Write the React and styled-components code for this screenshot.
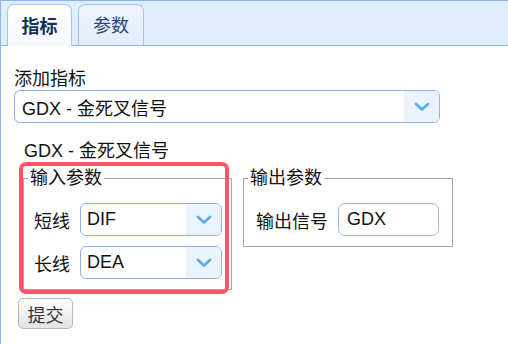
import React from "react";
import styled, { createGlobalStyle } from "styled-components";

const Global = createGlobalStyle`
  html, body { margin: 0; padding: 0; background: #fff; overflow: hidden; }
  body { font-family: "Liberation Sans", "Noto Sans CJK SC", sans-serif; font-size: 18px; color: #111; }
  * { box-sizing: border-box; }
`;

const Container = styled.div`
  width: 100vw;
  height: 100vh;
  border-top: 1px solid #8fb5e6;
  border-left: 1px solid #8fb5e6;
  background: #fff;
`;

const TabBar = styled.div`
  display: flex;
  align-items: flex-end;
  gap: 6px;
  height: 45px;
  padding-left: 6px;
  background: #dfedfd;
  border-bottom: 1px solid #8fb5e6;
`;

const Tab = styled.div`
  width: ${(p) => p.$w}px;
  height: 42px;
  margin-bottom: -1px;
  border: 1px solid #a3c4ee;
  border-bottom: ${(p) => (p.$active ? "none" : "1px solid #8fb5e6")};
  border-radius: 7px 7px 0 0;
  background: ${(p) =>
    p.$active
      ? "linear-gradient(#ffffff, #f6f9ff)"
      : "linear-gradient(#edf4fe, #e2edfc)"};
  display: flex;
  align-items: center;
  justify-content: center;
  padding-bottom: 2px;
  font-weight: ${(p) => (p.$active ? 700 : 400)};
  color: ${(p) => (p.$active ? "#162f5c" : "#2a4670")};
  font-size: 18px;
`;

const Content = styled.div`
  padding: 23px 0 0 13px;
`;

const Label = styled.div`
  line-height: 21px;
  height: 21px;
`;

const SelectBox = styled.div`
  display: flex;
  align-items: stretch;
  width: ${(p) => p.$w}px;
  height: ${(p) => p.$h || 33}px;
  border: 1px solid #8db4ea;
  border-radius: 6px;
  overflow: hidden;
  background: #fff;
`;

const SelectValue = styled.div`
  flex: 1;
  display: flex;
  align-items: center;
  padding-left: ${(p) => p.$pl || 6}px;
  white-space: nowrap;
`;

const ArrowPart = styled.div`
  width: 35px;
  background: #eaf3ff;
  display: flex;
  align-items: center;
  justify-content: center;
`;

const Heading = styled.div`
  margin: 18px 0 0 10px;
  line-height: 21px;
  height: 21px;
`;

const FieldsetRow = styled.div`
  position: relative;
  display: flex;
  align-items: flex-start;
  gap: 11px;
  margin: 6px 0 0 9px;
`;

const Fieldset = styled.fieldset`
  margin: 0;
  border: 1px solid #a6a6a6;
  padding: 0 ${(p) => p.$pr}px 10px 4px;
  min-width: 0;
`;

const Legend = styled.legend`
  padding: 0 2px;
  line-height: 21px;
`;

const Rows = styled.div`
  display: flex;
  flex-direction: column;
  gap: 10px;
  padding: 14px 0 0 ${(p) => p.$pl}px;
`;

const Row = styled.div`
  display: flex;
  align-items: center;
  gap: ${(p) => p.$gap}px;
`;

const TextInput = styled.div`
  width: 101px;
  height: 33px;
  border: 1px solid #94b9ec;
  border-radius: 7px;
  display: flex;
  align-items: center;
  padding-left: 8px;
`;

const Highlight = styled.div`
  position: absolute;
  left: -4px;
  top: -6px;
  width: 210px;
  height: 132px;
  border: 4px solid #ff5468;
  border-radius: 7px;
  pointer-events: none;
`;

const Button = styled.button`
  display: block;
  margin: 8px 0 0 4px;
  width: 55px;
  height: 31px;
  border: 1px solid #b9b9b9;
  border-radius: 5px;
  background: linear-gradient(#fefefe, #e4e4e4);
  font: inherit;
  font-size: 18px;
  color: #333;
  padding: 0;
`;

const Chevron = () => (
  <svg width="16" height="10" viewBox="0 0 16 10">
    <path d="M2 2 L8 7.5 L14 2" fill="none" stroke="#5aaef0" strokeWidth="2.8" strokeLinecap="round" strokeLinejoin="round" />
  </svg>
);

const Select = ({ w, value, pl }) => (
  <SelectBox $w={w}>
    <SelectValue $pl={pl}>{value}</SelectValue>
    <ArrowPart>
      <Chevron />
    </ArrowPart>
  </SelectBox>
);

export default function App() {
  return (
    <>
      <Global />
      <Container>
        <TabBar>
          <Tab $active $w={65}>指标</Tab>
          <Tab $w={66}>参数</Tab>
        </TabBar>
        <Content>
          <Label>添加指标</Label>
          <Select w={426} value="GDX - 金死叉信号" pl={7} />
          <Heading>GDX - 金死叉信号</Heading>
          <FieldsetRow>
            <Fieldset $pr={9}>
              <Legend>输入参数</Legend>
              <Rows $pl={6}>
                <Row $gap={10}>
                  <span>短线</span>
                  <Select w={142} value="DIF" />
                </Row>
                <Row $gap={10}>
                  <span>长线</span>
                  <Select w={142} value="DEA" />
                </Row>
              </Rows>
            </Fieldset>
            <Fieldset $pr={13}>
              <Legend>输出参数</Legend>
              <Rows $pl={8}>
                <Row $gap={10}>
                  <span>输出信号</span>
                  <TextInput>GDX</TextInput>
                </Row>
              </Rows>
            </Fieldset>
            <Highlight />
          </FieldsetRow>
          <Button>提交</Button>
        </Content>
      </Container>
    </>
  );
}
